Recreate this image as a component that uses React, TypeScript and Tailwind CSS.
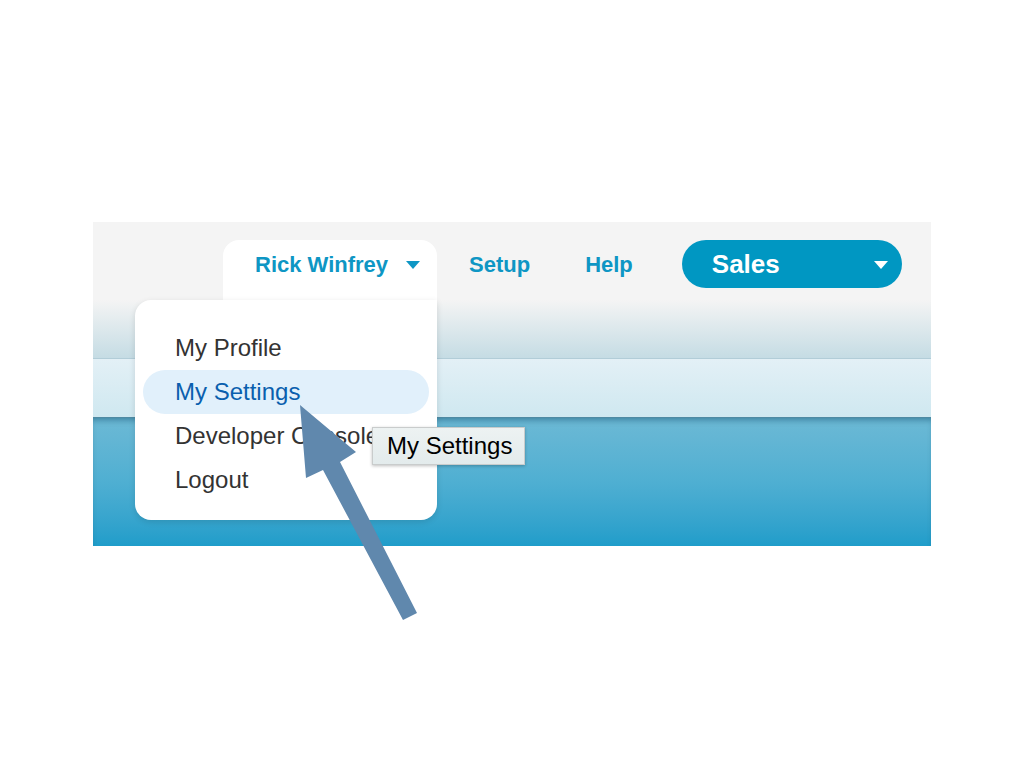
const Caret = ({ className }: { className: string }) => (
  <svg width="14" height="8" viewBox="0 0 14 8" className={className}>
    <polygon points="0,0 14,0 7,8" fill="currentColor" />
  </svg>
);

const menuItems = ["My Profile", "My Settings", "Developer Console", "Logout"];

const App = () => (
  <div className="relative w-[1024px] h-[768px] bg-white overflow-hidden" style={{ fontFamily: '"Liberation Sans", Arial, sans-serif' }}>
    <div className="pt-[222px] pl-[93px]">
      <section className="w-[838px]">
        <div className="h-[78px] bg-[#f4f4f4] flex items-start pt-[18px]">
          <div className="relative ml-[130px] w-[214px] h-[60px] bg-white rounded-t-[16px] z-10">
            <div className="h-[48px] flex items-center pl-[32px] text-[#0e96c4] text-[22px] font-bold">
              <span>Rick Winfrey</span>
              <Caret className="ml-[18px] mt-[2px] text-[#0e96c4]" />
            </div>
            <div className="absolute top-[60px] right-0 w-[302px] bg-white rounded-b-[16px] rounded-tl-[16px] pt-[26px] pb-[18px] px-[8px] shadow-[0_2px_6px_rgba(0,0,0,0.12)]">
              {menuItems.map((item) => (
                <div
                  key={item}
                  className={
                    item === "My Settings"
                      ? "h-[44px] flex items-center pl-[32px] rounded-full bg-[#e1f0fb] text-[#0a5fae] text-[24px]"
                      : "h-[44px] flex items-center pl-[32px] text-[#333333] text-[24px]"
                  }
                >
                  {item}
                </div>
              ))}
            </div>
          </div>
          <div className="ml-[32px] h-[48px] flex items-center text-[#0e96c4] text-[22px] font-bold">Setup</div>
          <div className="ml-[55px] h-[48px] flex items-center text-[#0e96c4] text-[22px] font-bold">Help</div>
          <div className="ml-[49px] w-[220px] h-[48px] rounded-full bg-[#0097c2] flex items-center justify-between pl-[30px] pr-[14px] text-white">
            <span className="text-[26px] font-bold">Sales</span>
            <Caret className="mt-[2px] text-white" />
          </div>
        </div>
        <div className="h-[58px] bg-gradient-to-b from-[#f4f4f4] to-[#c5dce4]" />
        <div className="h-[1px] bg-[#b2cdd8]" />
        <div className="h-[58px] bg-gradient-to-b from-[#e3f0f6] to-[#cfe8f0]" />
        <div className="h-[1px] bg-[#4f8aa3]" />
        <div className="h-[128px] bg-gradient-to-b from-[#6cb9d5] via-[#4fafd2] to-[#1f9dca] shadow-[inset_0_5px_6px_-3px_rgba(0,60,90,0.45)]" />
      </section>
    </div>

    <div className="absolute z-20 left-[372px] top-[427px] w-[153px] h-[38px] flex items-center pl-[14px] bg-gradient-to-b from-[#edf2f2] to-[#e3ebec] border border-[#c9cccc] shadow-[0_1px_3px_rgba(0,0,0,0.25)] text-[24px] text-black">
      My Settings
    </div>

    <svg className="absolute z-30 left-0 top-0 pointer-events-none" width="1024" height="768" viewBox="0 0 1024 768">
      <polygon
        points="300,405 306,478 323,470 403,620 417,613 340,462 356,452"
        fill="#6088ad"
      />
    </svg>
  </div>
);

export default App;
